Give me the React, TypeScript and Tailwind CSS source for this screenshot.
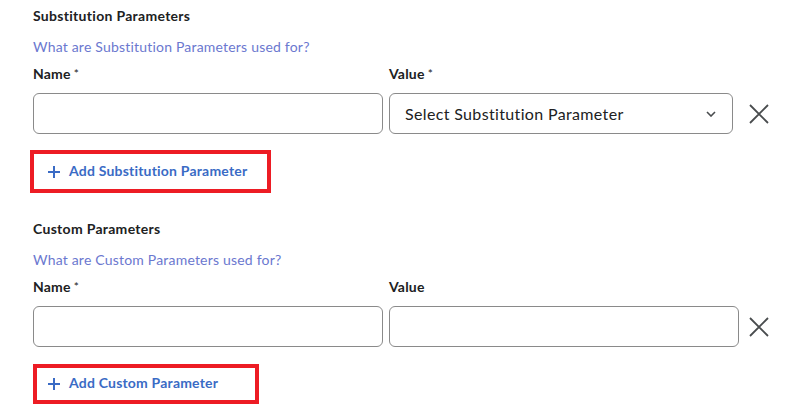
import React from "react";

const XIcon = () => (
  <svg width="20" height="20" viewBox="0 0 20 20" className="shrink-0">
    <path d="M1 1 L19 19 M19 1 L1 19" stroke="#494c4e" strokeWidth="1.8" fill="none" />
  </svg>
);

const Plus = () => (
  <svg width="12" height="12" viewBox="0 0 12 12" className="shrink-0">
    <path d="M6 0 V12 M0 6 H12" stroke="#3a6bc5" strokeWidth="2" fill="none" />
  </svg>
);

const Label = ({ text, req }: { text: string; req?: boolean }) => (
  <div className="text-[14px] leading-[16px] font-bold tracking-[0.2px] text-[#202122]">
    {text}
    {req && <span className="ml-[3px] font-normal text-[12px] align-top">*</span>}
  </div>
);

export default function App() {
  return (
    <div
      className="w-[809px] h-[418px] bg-white pl-[33px] pt-[8px] overflow-hidden"
      style={{ fontFamily: "Lato, 'Open Sans', sans-serif" }}
    >
      {/* Substitution Parameters */}
      <div className="text-[14px] leading-[16px] font-bold tracking-[0.3px] text-[#202122]">Substitution Parameters</div>
      <div className="mt-[15px] text-[14px] leading-[16px] tracking-[0.2px] text-[#6b78cf]">What are Substitution Parameters used for?</div>
      <div className="mt-[11px] flex">
        <div className="w-[356px]"><Label text="Name" req /></div>
        <div><Label text="Value" req /></div>
      </div>
      <div className="mt-[11px] flex items-center">
        <div className="w-[350px] h-[41px] border border-[#8a8a8a] rounded-[6px]" />
        <div className="ml-[6px] w-[344px] h-[41px] border border-[#8a8a8a] rounded-[6px] flex items-center pl-[15px] pr-[16px]">
          <span className="flex-1 text-[16px] leading-[20px] tracking-[0.35px] text-[#202122]">Select Substitution Parameter</span>
          <svg width="10" height="6" viewBox="0 0 10 6">
            <path d="M1 1 L5 5 L9 1" stroke="#494c4e" strokeWidth="1.6" fill="none" />
          </svg>
        </div>
        <div className="ml-[16px]"><XIcon /></div>
      </div>
      <div className="mt-[16px] ml-[-3px] w-[241px] h-[43px] border-[4px] border-[#ed1c24] flex items-center pl-[14px] gap-[9px]">
        <Plus />
        <span className="text-[14px] leading-[16px] font-bold tracking-[0.2px] text-[#3a6bc5] -translate-y-[1px]">Add Substitution Parameter</span>
      </div>

      {/* Custom Parameters */}
      <div className="mt-[28px] text-[14px] leading-[16px] font-bold tracking-[0.3px] text-[#202122]">Custom Parameters</div>
      <div className="mt-[15px] text-[14px] leading-[16px] tracking-[0.2px] text-[#6b78cf]">What are Custom Parameters used for?</div>
      <div className="mt-[11px] flex">
        <div className="w-[356px]"><Label text="Name" req /></div>
        <div><Label text="Value" /></div>
      </div>
      <div className="mt-[11px] flex items-center">
        <div className="w-[350px] h-[41px] border border-[#8a8a8a] rounded-[6px]" />
        <div className="ml-[6px] w-[350px] h-[41px] border border-[#8a8a8a] rounded-[6px]" />
        <div className="ml-[10px]"><XIcon /></div>
      </div>
      <div className="mt-[17px] w-[226px] h-[40px] border-[4px] border-[#ed1c24] flex items-center pl-[11px] gap-[9px]">
        <Plus />
        <span className="text-[14px] leading-[16px] font-bold tracking-[0.2px] text-[#3a6bc5] -translate-y-[1px]">Add Custom Parameter</span>
      </div>
    </div>
  );
}
